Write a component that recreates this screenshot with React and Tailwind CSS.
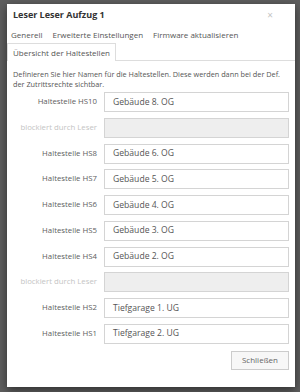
const rows = [
  { label: "Haltestelle HS10", value: "Gebäude 8. OG" },
  { label: "blockiert durch Leser", blocked: true },
  { label: "Haltestelle HS8", value: "Gebäude 6. OG" },
  { label: "Haltestelle HS7", value: "Gebäude 5. OG" },
  { label: "Haltestelle HS6", value: "Gebäude 4. OG" },
  { label: "Haltestelle HS5", value: "Gebäude 3. OG" },
  { label: "Haltestelle HS4", value: "Gebäude 2. OG" },
  { label: "blockiert durch Leser", blocked: true },
  { label: "Haltestelle HS2", value: "Tiefgarage 1. UG" },
  { label: "Haltestelle HS1", value: "Tiefgarage 2. UG" },
];

const tabs = ["Generell", "Erweiterte Einstellungen", "Firmware aktualisieren"];

export default function App() {
  return (
    <div className="w-[300px] h-[392px] overflow-hidden bg-[#5e5e5e] pt-[4px] pl-[7px] font-['Open_Sans',sans-serif]">
      <div className="w-[288px] h-[383px] bg-white shadow-[0_3px_9px_rgba(0,0,0,0.5)] flex flex-col">
        <div className="h-[22px] flex items-center justify-between pl-[6px] pr-[22px]">
          <span className="text-[9px] font-bold text-[#333]">Leser Leser Aufzug 1</span>
          <span className="text-[10px] text-[#c4c4c4] leading-none">×</span>
        </div>

        <ul className="flex flex-wrap border-b border-[#ddd]">
          {tabs.map(t => (
            <li key={t} className="h-[17px] px-[4px] mr-[2px] flex items-center text-[8px] text-[#555]">
              {t}
            </li>
          ))}
          <li className="h-[18px] -mb-px px-[5px] flex items-center text-[8px] text-[#555] bg-white border border-b-0 border-[#ddd]">
            Übersicht der Haltestellen
          </li>
        </ul>

        <div className="px-[6px] pt-[8px]">
          <p className="text-[7.3px] leading-[10px] text-[#555]">
            Definieren Sie hier Namen für die Haltestellen. Diese werden dann bei der Def. der Zutrittsrechte sichtbar.
          </p>

          <div className="mt-[3px] flex flex-col gap-[5.75px]">
            {rows.map((r, i) => (
              <div key={i} className="flex items-center">
                <div className={"w-[86px] shrink-0 text-right pr-[2px] text-[7.8px] " + (r.blocked ? "text-[#c4c4c4]" : "text-[#606060]")}>
                  {r.label}
                </div>
                <div className={"ml-[5px] w-[185px] shrink-0 h-[20px] border border-[#d4d4d4] flex items-center px-[8px] text-[8.6px] text-[#555] " + (r.blocked ? "bg-[#eee]" : "bg-white")}>
                  {r.value}
                </div>
              </div>
            ))}
          </div>

          <div className="flex justify-end mt-[7px]">
            <button className="w-[58px] h-[19px] border border-[#ccc] bg-[#f7f7f7] text-[8px] text-[#666]">
              Schließen
            </button>
          </div>
        </div>
      </div>
    </div>
  );
}
